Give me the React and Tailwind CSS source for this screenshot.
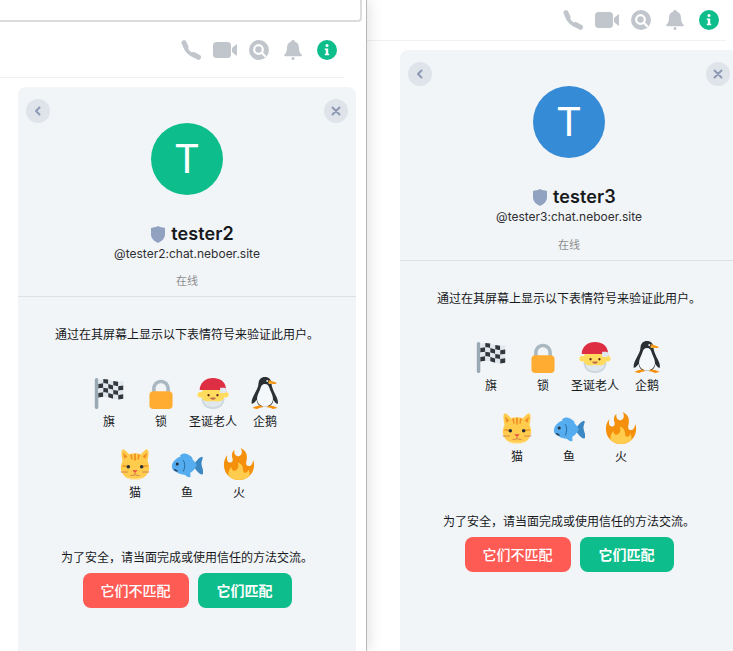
import React from 'react';

const FONT = 'font-[Inter,"Noto_Sans_CJK_SC",sans-serif]';

function CheckeredFlag() {
    // wavy flag grid, cells alternate dark and light
    const cols = 5;
    const rows = 4;
    const px = (c) => 6 + c * 5.6;
    const py = (c, r) => 3 + r * 5 + Math.sin((c / cols) * Math.PI * 2) * -1.2 + c * 0.3;
    const cells = [];
    for (let c = 0; c < cols; c++) {
        for (let r = 0; r < rows; r++) {
            cells.push(
                <polygon
                    key={`${c}-${r}`}
                    fill={(c + r) % 2 === 0 ? '#E1E8ED' : '#31373D'}
                    points={`${px(c)},${py(c, r)} ${px(c + 1)},${py(c + 1, r)} ${px(c + 1)},${py(c + 1, r + 1)} ${px(c)},${py(c, r + 1)}`}
                />
            );
        }
    }
    return (
        <svg viewBox="0 0 36 36" className="w-8 h-8">
            <path d="M4 1c1.100 0 2 .9 2 2v31c0 1.100-.9 2-2 2s-2-.9-2-2V3c0-1.100.9-2 2-2z" fill="#99AAB5" />
            {cells}
        </svg>
    );
}

function Lock() {
    return (
        <svg viewBox="0 0 36 36" className="w-8 h-8">
            <path fill="#AAB8C2" d="M18 3C12.477 3 8 7.477 8 13v10h4V13c0-3.313 2.686-6 6-6s6 2.687 6 6v10h4V13c0-5.523-4.477-10-10-10z" />
            <path fill="#FFAC33" d="M31 32c0 2.209-1.791 4-4 4H9c-2.209 0-4-1.791-4-4V20c0-2.209 1.791-4 4-4h18c2.209 0 4 1.791 4 4v12z" />
        </svg>
    );
}

function Santa() {
    return (
        <svg viewBox="0 0 36 36" className="w-8 h-8">
            <circle cx="3.500" cy="20" r="3" fill="#FFDC5D" />
            <circle cx="32.500" cy="20" r="3" fill="#FFDC5D" />
            <path fill="#CCD6DD" d="M5 24c0 7 5 12 13 12s13-5 13-12z" />
            <ellipse cx="18" cy="20" rx="13.500" ry="9.500" fill="#FFDC5D" />
            <path fill="#E1E8ED" d="M7 26c3 2.500 7 1 11 1s8 1.500 11-1c-1 5-5 8-11 8s-10-3-11-8z" />
            <path fill="#DD2E44" d="M3 15C3 6 10 1 18 1c8 0 13.500 4 14.500 11l.5 5h-4l-1-2.500H3z" />
            <path fill="#E1E8ED" d="M26 12h4.500c1.700 0 3 1.500 3 3s-1.300 3-3 3H26z" />
            <circle cx="13" cy="20.500" r="1.300" fill="#662113" />
            <circle cx="23" cy="20.500" r="1.300" fill="#662113" />
            <path fill="#C1694F" d="M16 23h4c.6 0 1 .5 1 1s-.8 1.500-3 1.500-3-1-3-1.500.4-1 1-1z" />
        </svg>
    );
}

function Penguin() {
    return (
        <svg viewBox="0 0 36 36" className="w-8 h-8">
            <path fill="#292F33" d="M18 0c-4.500 0-7 3-7.300 7-.3 4-1.200 6-4.200 11.500C4.500 22 2.500 26 3 30c2 .2 4-2 5.500-4.500.5 3.500 2 6 4.500 7.500h10c2.500-1.500 4-4 4.500-7.500C28.500 28 30.500 30.200 32.500 30c.5-4-1.500-8-3.500-11.500C26.500 13 25.600 11 25.300 7 25 3 22.500 0 18 0z" />
            <path fill="#F5F8FA" d="M18 8c3 0 4.500 2 5.200 5 .8 3.500 3.800 7 3.800 11.500 0 5-3.500 8.500-9 8.500s-9-3.500-9-8.500c0-4.500 3-8 3.800-11.500.7-3 2.200-5 5.200-5z" />
            <path fill="#F4900C" d="M22 3.500l9 3-.5 1.500-8-.5z" />
            <path fill="#FFCC4D" d="M22 5.500l5 1.500-5 .5z" />
            <circle cx="20.500" cy="4.500" r="1" fill="#F5F8FA" />
            <path fill="#F4900C" d="M4 35c2-2 6-3 10-3l2 2c-3 0-5 1-7 2zM32 35c-2-2-6-3-10-3l-2 2c3 0 5 1 7 2z" />
        </svg>
    );
}

function Cat() {
    return (
        <svg viewBox="0 0 36 36" className="w-8 h-8">
            <path fill="#FFCC4D" d="M33 3c-.4-1.600-2-1.600-3.500-.8L24.500 7C22.500 6.300 20.300 6 18 6s-4.500.3-6.500 1L6.500 2.200C5 1.400 3.400 1.400 3 3c-.6 3 0 8 1 11.500C2.700 17 2 19.400 2 22c0 8 7 14 16 14s16-6 16-14c0-2.600-.7-5-2-7.500 1-3.500 1.600-8.500 1-11.500z" />
            <path fill="#F18F26" d="M4.500 5l5 4.500L6 12zM31.500 5l-5 4.500L30 12zM17 6.500h2V14h-2zM12.500 7.500l2-.5 1 6-1.500.3zM23.500 7.500l-2-.5-1 6 1.500.3zM4 19l5 1-.4 1.500-5-.7zM32 19l-5 1 .4 1.500 5-.7z" />
            <circle cx="10.500" cy="21" r="2" fill="#292F33" />
            <circle cx="25.500" cy="21" r="2" fill="#292F33" />
            <path fill="#DD2E44" d="M15 25h6l-3 3z" opacity="0.8" />
            <path fill="none" stroke="#C1694F" strokeWidth="0.8" d="M18 28v2M13 31c2 0 3.500-.5 5-1 1.500.5 3 1 5 1M2 27h8M26 27h8" />
            <path fill="#FFE8B6" d="M8 33c3 2 6 3 10 3s7-1 10-3c-3 1-6 1.500-10 1.500S11 34 8 33z" />
        </svg>
    );
}

function Fish() {
    return (
        <svg viewBox="0 0 36 36" className="w-8 h-8">
            <path fill="#3B88C3" d="M26 18c2-3 5-7 8-8 1.500-.3 2 .5 1.500 2-1 3-1.500 5-1 7.500.5 3 2.500 7 2 9-.5 1.500-2.500 1.500-4 .5-3-2-5-5-6.500-7.500z" />
            <path fill="#55ACEE" d="M10 9c1-2.500 4-3.500 7-2.500 3 1 6.500 3 7.500 5.500l-9 1zM14 28c2 2.500 4 5 7 5 1.500 0 1-2.500.5-5z" />
            <path fill="#55ACEE" d="M1 21c0-6.500 7-12 14-12 6 0 11 4 14 10.500C26 26 21 30 15 30c-3 0-6-1-8-2.500l-2.500-1C2 25 1 23 1 21z" />
            <path fill="none" stroke="#269" strokeWidth="1" strokeLinecap="round" d="M14 14c2 3 2 8 0 12" />
            <circle cx="7" cy="18" r="1.700" fill="#292F33" />
            <path fill="#292F33" d="M3 23.500c2 0 4 1 5 3-2 0-4-1-5-3z" />
        </svg>
    );
}

function Fire() {
    return (
        <svg viewBox="0 0 36 36" className="w-8 h-8">
            <path fill="#F4900C" d="M35 19c0-2.062-.367-4.039-1.040-5.868-.46 5.389-3.333 8.157-6.335 6.868-2.812-1.208-.917-5.917-.777-8.164.236-3.809-.012-8.169-6.931-11.794 2.875 5.500.333 8.917-2.333 9.125-2.958.231-5.667-2.542-4.667-7.042-3.238 2.386-3.332 6.402-2.333 9 1.042 2.708-.042 4.958-2.583 5.208-2.840.28-4.418-3.041-2.963-8.333C2.520 10.965 1 14.805 1 19c0 9.389 7.611 17 17 17s17-7.611 17-17z" />
            <path fill="#FFCC4D" d="M28.394 23.999c.148 3.084-2.561 4.293-4.019 3.709-2.106-.843-1.541-2.291-2.083-5.291s-2.625-5.083-5.708-6c2.250 6.333-1.247 8.667-3.080 9.084-1.872.426-3.753-.001-3.968-4.007C7.352 23.668 6 26.676 6 30c0 .368.023.730.055 1.090C9.125 34.124 13.342 36 18 36s8.875-1.876 11.945-4.910c.032-.36.055-.722.055-1.090 0-2.187-.584-4.236-1.606-6.001z" />
        </svg>
    );
}

const EMOJIS = [
    { label: '旗', icon: <CheckeredFlag /> },
    { label: '锁', icon: <Lock /> },
    { label: '圣诞老人', icon: <Santa /> },
    { label: '企鹅', icon: <Penguin /> },
    { label: '猫', icon: <Cat /> },
    { label: '鱼', icon: <Fish /> },
    { label: '火', icon: <Fire /> },
];

function HeaderIcons() {
    return (
        <div className="flex items-center">
            <svg viewBox="0 0 20 20" className="w-5 h-5 mr-[12px]" fill="none" stroke="#c1c6cd" strokeLinecap="round">
                <path d="M3.500 3.500c.5 6.500 5.500 12 12.500 13" strokeWidth="3.500" />
                <path d="M3 2.700l2 4.300M12.500 14.500l5 2.800" strokeWidth="5" />
            </svg>
            <svg viewBox="0 0 24 16" className="w-6 h-4 mr-[12px]">
                <rect x="0" y="0" width="18" height="16" rx="3.500" fill="#c1c6cd" />
                <path d="M19 6l4-3.500c.4-.3 1-.1 1 .5v10c0 .6-.6.8-1 .5L19 10z" fill="#c1c6cd" />
            </svg>
            <svg viewBox="0 0 20 20" className="w-5 h-5 mr-[15px]">
                <circle cx="10" cy="10" r="10" fill="#c1c6cd" />
                <circle cx="9.500" cy="9.500" r="4.300" fill="none" stroke="#fff" strokeWidth="2.200" />
                <path d="M13 13l3 3" stroke="#fff" strokeWidth="2.400" strokeLinecap="round" />
            </svg>
            <svg viewBox="0 0 18 20" className="w-[18px] h-5 mr-[15px]">
                <path fill="#c1c6cd" d="M9 0c1 0 1.700.7 1.800 1.600C13.800 2.400 15 5 15 8c0 3.500 1 5.200 2.500 6.500.7.700.4 1.800-.7 1.800H1.200c-1.100 0-1.400-1.100-.7-1.800C2 13.200 3 11.500 3 8c0-3 1.200-5.600 4.200-6.400C7.300.7 8 0 9 0z" />
                <circle cx="9" cy="18.500" r="1.500" fill="#c1c6cd" />
            </svg>
            <svg viewBox="0 0 20 20" className="w-5 h-5">
                <circle cx="10" cy="10" r="10" fill="#0dbd8b" />
                <circle cx="10" cy="5.600" r="1.500" fill="#fff" />
                <path fill="#fff" d="M7.800 8.400h3.400v5.400h1v1.500H7.800v-1.500h1v-3.900h-1z" />
            </svg>
        </div>
    );
}

function VerifyPanel({ name, color, statusGap }) {
    return (
        <div className="relative w-[338px] shrink-0 rounded-t-lg bg-[#f2f5f8] flex flex-col items-center text-[#17191c]">
            <button className="absolute left-2 top-3 w-6 h-6 rounded-full bg-[#dfe3ea] flex items-center justify-center">
                <svg viewBox="0 0 12 12" className="w-3 h-3" fill="none" stroke="#8d99b5" strokeWidth="2" strokeLinecap="round" strokeLinejoin="round">
                    <path d="M7.500 2.500L4 6l3.500 3.500" />
                </svg>
            </button>
            <button className="absolute right-2 top-3 w-6 h-6 rounded-full bg-[#dfe3ea] flex items-center justify-center">
                <svg viewBox="0 0 12 12" className="w-3 h-3" fill="none" stroke="#8d99b5" strokeWidth="2" strokeLinecap="round">
                    <path d="M2.500 2.500l7 7M9.500 2.500l-7 7" />
                </svg>
            </button>

            <div className={`mt-9 w-[72px] h-[72px] rounded-full flex items-center justify-center text-white text-[40px] leading-none ${color}`}>T</div>

            <div className="mt-[28px] pl-[11px] h-[22px] flex items-center gap-[6px] text-[18px] leading-[22px] font-semibold tracking-[0.1px]">
                <svg viewBox="0 0 14 17" className="w-[14px] h-[17px]">
                    <path fill="#91a1c0" d="M7 0c2 1 4.500 1.500 6.500 1.700.3 0 .5.300.5.600v6.200c0 4-3.500 7-7 8.500-3.500-1.500-7-4.500-7-8.500V2.300c0-.3.200-.6.500-.6C2.500 1.500 5 1 7 0z" />
                </svg>
                {name}
            </div>
            <div className="mt-px text-xs leading-4 text-[#2e2f32]">@{name}:chat.neboer.site</div>
            <div className={`text-[11px] leading-4 text-[#8e8e8e] ${statusGap}`}>在线</div>
            <div className="mt-[7px] w-full h-px bg-[#dde1e6]" />

            <div className="mt-[30px] text-xs leading-4">通过在其屏幕上显示以下表情符号来验证此用户。</div>

            <div className="mt-[34px] w-[208px] flex flex-wrap justify-center">
                {EMOJIS.map((e) => (
                    <div key={e.label} className="w-[52px] h-[71px] flex flex-col items-center">
                        {e.icon}
                        <div className="mt-[5px] text-xs leading-4 whitespace-nowrap">{e.label}</div>
                    </div>
                ))}
            </div>

            <div className="mt-[31px] text-xs leading-4">为了安全，请当面完成或使用信任的方法交流。</div>
            <div className="mt-[7px] flex gap-[9px]">
                <button className="w-[106px] h-[35px] rounded-lg bg-[#ff5b55] text-white text-sm font-medium">它们不匹配</button>
                <button className="w-[94px] h-[35px] rounded-lg bg-[#0dbd8b] text-white text-sm font-bold">它们匹配</button>
            </div>
        </div>
    );
}

export default function App() {
    return (
        <div className={`flex w-[733px] h-[651px] overflow-hidden bg-white ${FONT}`}>
            <div className="relative z-10 w-[367px] shrink-0 flex flex-col bg-white border-r border-[#b9b9b9] shadow-[1px_0_14px_rgba(0,0,0,0.14)]">
                <div className="w-[362px] h-[22px] shrink-0 border-r-2 border-b-2 border-[#dcdcdc] rounded-br-sm" />
                <div className="w-[344px] h-[56px] shrink-0 flex items-center justify-end pr-[7px] border-b border-[#f0f1f3]">
                    <HeaderIcons />
                </div>
                <div className="mt-[9px] ml-[18px] flex-1 flex">
                    <VerifyPanel name="tester2" color="bg-[#0dbd8b]" statusGap="mt-[11px]" />
                </div>
            </div>
            <div className="flex-1 flex flex-col min-w-0">
                <div className="w-[359px] h-[41px] shrink-0 flex items-center justify-end pr-[7px] border-b border-[#f0f1f3]">
                    <HeaderIcons />
                </div>
                <div className="mt-[9px] ml-[33px] flex-1 flex">
                    <VerifyPanel name="tester3" color="bg-[#368bd6]" statusGap="mt-[12px]" />
                </div>
            </div>
        </div>
    );
}
